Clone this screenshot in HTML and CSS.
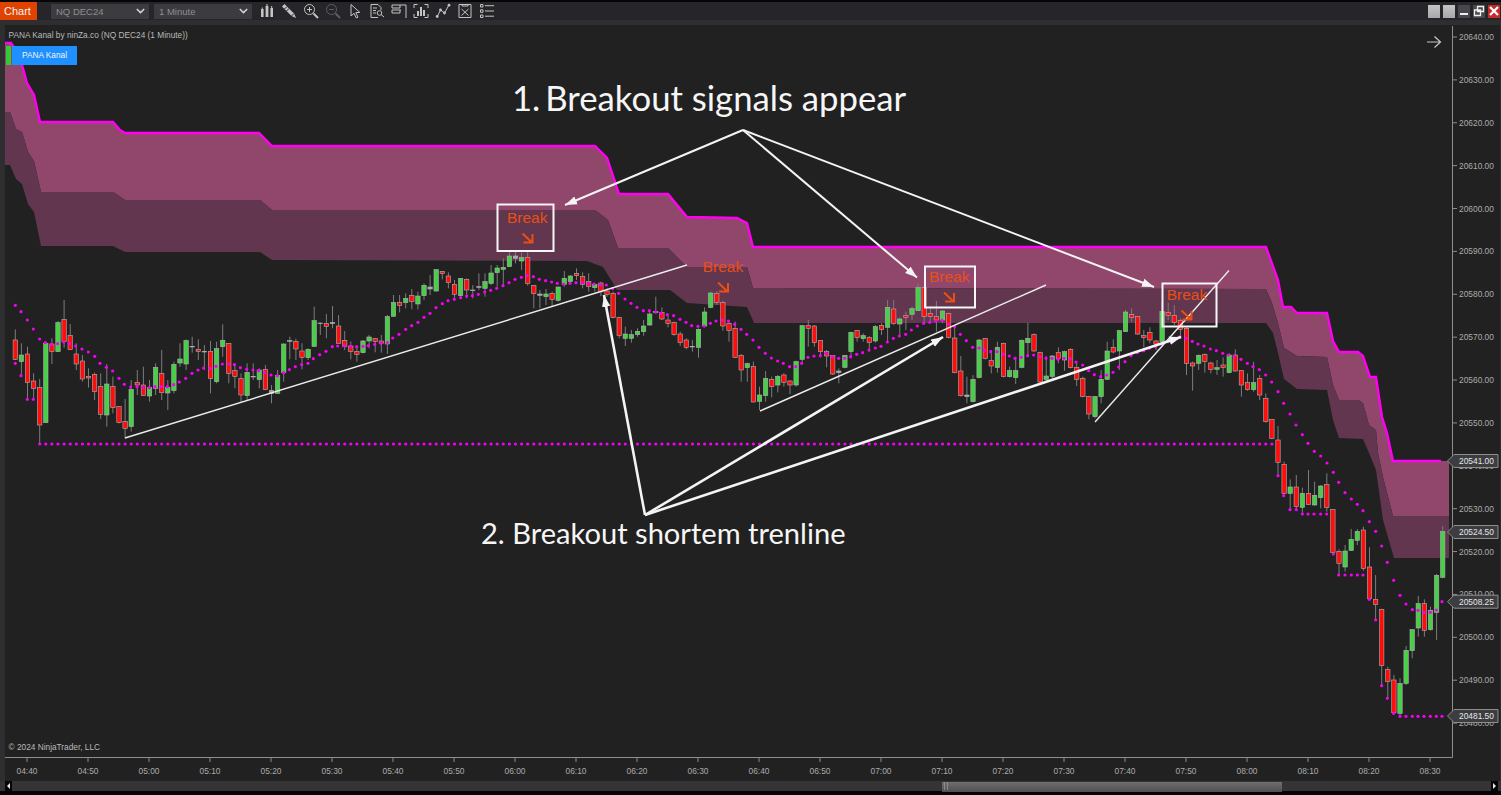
FILE: index.html
```html
<!DOCTYPE html>
<html lang="en">
<head>
    <meta charset="UTF-8">
    <meta name="viewport" content="width=device-width, initial-scale=1.0">
    <title>Chart - NQ DEC24</title>
    <link rel="stylesheet" href="styles.css">
</head>
<body>
    <div class="window">
        <!-- toolbar -->
        <div class="toolbar">
            <div class="chart-tab">Chart</div>
            <div class="select select-first">
                <span>NQ DEC24</span>
                <svg class="chevron" viewBox="0 0 9 6"><path d="M0.8 1 L4.5 4.6 L8.2 1"/></svg>
            </div>
            <div class="select">
                <span>1 Minute</span>
                <svg class="chevron" viewBox="0 0 9 6"><path d="M0.8 1 L4.5 4.6 L8.2 1"/></svg>
            </div>
            <div class="tools">
                <svg class="tool" viewBox="0 0 16 16"><path class="solid" d="M2 6h2.6v8H2z M6.6 3h2.8v11H6.6z M11.4 5h2.6v9h-2.6z"/><path d="M8 1v2 M12.7 3v2 M3.3 4.5v2"/></svg>
                <svg class="tool" viewBox="0 0 16 16"><path class="solid" d="M1 3.5 L3.5 1 L13 10.5 L15 15 L10.5 13 Z"/><path class="cut" d="M3.5 6 L6 3.5 M5.5 8 L8 5.5 M10.5 13 L13 10.5"/></svg>
                <svg class="tool" viewBox="0 0 16 16"><circle cx="6.5" cy="6.5" r="5"/><path d="M4 6.5h5 M6.5 4v5"/><path class="heavy" d="M10.5 10.5 L15 15"/></svg>
                <svg class="tool tool-off" viewBox="0 0 16 16"><circle cx="6.5" cy="6.5" r="5"/><path d="M4 6.5h5"/><path class="heavy" d="M10.5 10.5 L15 15"/></svg>
                <svg class="tool" viewBox="0 0 16 16"><path d="M4 1.5 V13 L7 10.3 L9.3 15 L11 14.2 L8.8 9.6 L12.8 9.4 Z"/></svg>
                <svg class="tool" viewBox="0 0 16 16"><path d="M9 14.5 H2 V1.5 H9 L12 4.5 V7"/><path d="M4 5h4 M4 7.5h3 M4 10h3"/><circle cx="10.5" cy="10" r="2.3"/><path d="M12.2 11.7 L15 14"/></svg>
                <svg class="tool" viewBox="0 0 16 16"><path d="M1 2h14 M15 2v13 M1 2v3h8V2 M1 7h9 M1 7v3h8V7"/></svg>
                <svg class="tool" viewBox="0 0 16 16"><path d="M1 5V1.5h3.5 M11.5 1.5H15V5 M1 11v3.5h3.5 M11.5 14.5H15V11"/><path class="heavy" d="M5 13V8 M8 13V4 M11 13V7"/></svg>
                <svg class="tool" viewBox="0 0 16 16"><path d="M2 14 L5.5 7 L9.5 10 L14 2"/><circle class="solid" cx="2.2" cy="13.5" r="1.4"/><circle class="solid" cx="5.5" cy="7" r="1.4"/><circle class="solid" cx="9.5" cy="10" r="1.4"/><circle class="solid" cx="14" cy="2.2" r="1.4"/></svg>
                <svg class="tool" viewBox="0 0 16 16"><path d="M2 1.5h12v13H2z M5 1v2h6V1"/><path d="M4.5 6 L11.5 12.5 M11.5 6 L4.5 12.5"/></svg>
                <svg class="tool" viewBox="0 0 16 16"><path d="M1.5 1.5h2.5v2.5H1.5z M1.5 6.8h2.5v2.5H1.5z M1.5 12h2.5v2.5H1.5z M6 2.7h9 M6 8h9 M6 13.2h9"/></svg>
            </div>
            <div class="win-btns">
                <div class="win-btn win-btn-light"></div>
                <div class="win-btn win-btn-light"></div>
                <div class="win-btn win-btn-dark"><span class="min-bar"></span></div>
                <div class="win-btn win-btn-dark">
                    <svg viewBox="0 0 12 12"><path d="M4.5 1.5h6v5h-6z M1.5 5h6v5.500h-6z"/></svg>
                </div>
                <div class="win-btn win-btn-close">
                    <svg viewBox="0 0 12 12"><path d="M2 2 L10 10 M10 2 L2 10"/></svg>
                </div>
            </div>
        </div>

        <!-- chart -->
        <div class="chart">
            <svg class="chart-svg" viewBox="5 25 1495 756" width="1495" height="756">
                <defs>
                    <marker id="head" markerUnits="userSpaceOnUse" markerWidth="13" markerHeight="10" refX="12" refY="5" orient="auto">
                        <path d="M0 0.800 L12 5 L0 9.200 Z" fill="#f4f4f4"/>
                    </marker>
                    <symbol id="break-arrow" overflow="visible">
                        <path d="M0.5 0.5 L10 9.500 M1.500 9.500 H10.500 V1"/>
                    </symbol>
                </defs>

                <g id="bands"></g>
                <g id="candles"></g>
                <g id="dots"></g>
                <g id="axes"></g>

                <text class="chart-title" x="8.500" y="37.500">PANA Kanal by ninZa.co (NQ DEC24 (1 Minute))</text>
                <text class="chart-title" x="8.500" y="750">© 2024 NinjaTrader, LLC</text>
                <path class="arrow-right" d="M1427 42 H1440.500 M1434.500 36.500 L1440.500 42 L1434.500 47.500"/>

                <!-- drawn annotations -->
                <g class="trendlines">
                    <line x1="125" y1="438" x2="687" y2="265"/>
                    <line x1="760" y1="411" x2="1046" y2="285"/>
                    <line x1="1095" y1="422" x2="1229" y2="270.500"/>
                </g>
                <g class="pointers">
                    <line x1="743" y1="130" x2="565" y2="205" marker-end="url(#head)"/>
                    <line x1="743" y1="130" x2="917" y2="277.500" marker-end="url(#head)"/>
                    <line x1="743" y1="130" x2="1154" y2="287" marker-end="url(#head)"/>
                </g>
                <g class="pointers pointers-heavy">
                    <line x1="645" y1="515" x2="604" y2="295" marker-end="url(#head)"/>
                    <line x1="645" y1="515" x2="943" y2="337" marker-end="url(#head)"/>
                    <line x1="645" y1="515" x2="1181" y2="337" marker-end="url(#head)"/>
                </g>
                <g class="break-boxes">
                    <rect x="497.500" y="204.500" width="56" height="46.500"/>
                    <rect x="925" y="266.500" width="50" height="41"/>
                    <rect x="1162.500" y="283.500" width="54" height="43"/>
                </g>
                <g class="break-signals">
                    <text x="507" y="222.700">Break</text>
                    <text x="702.700" y="271.700">Break</text>
                    <text x="929" y="281.700">Break</text>
                    <text x="1166.700" y="300">Break</text>
                    <use href="#break-arrow" x="522" y="233"/>
                    <use href="#break-arrow" x="717.500" y="282"/>
                    <use href="#break-arrow" x="943.500" y="292"/>
                    <use href="#break-arrow" x="1181" y="310"/>
                </g>
                <text class="note" x="512" y="111">1.<tspan dx="5">Breakout signals appear</tspan></text>
                <text class="note note-small" x="481" y="544">2. Breakout shortem trenline</text>
            </svg>
            <div class="indicator-flag"><span class="flag-green"></span><span class="flag-label">PANA Kanal</span></div>
        </div>

        <!-- horizontal scroll -->
        <div class="scrollbar">
            <div class="scroll-end"><svg viewBox="0 0 7 10"><path d="M5 2 L2 5 L5 8 Z"/></svg></div>
            <div class="scroll-track">
                <div class="scroll-thumb"><span class="grip"></span></div>
            </div>
            <div class="scroll-end"><svg viewBox="0 0 7 10"><path d="M2 2 L5 5 L2 8 Z"/></svg></div>
        </div>
    </div>

    <script src="chart.js"></script>
</body>
</html>
```

FILE: styles.css
```css
* {
    margin: 0;
    padding: 0;
    box-sizing: border-box;
}

body {
    width: 1501px;
    height: 795px;
    font-family: 'Liberation Sans', Arial, sans-serif;
    background: #050505;
    overflow: hidden;
}

.window {
    height: 100%;
    display: flex;
    flex-direction: column;
    padding-top: 2px;
}

.toolbar {
    height: 18px;
    display: flex;
    align-items: center;
    background: #26262a;
    flex-shrink: 0;
}

.chart-tab {
    width: 37px;
    height: 18px;
    background: #e04300;
    color: #f4f4f4;
    font-size: 11px;
    line-height: 18px;
    padding-left: 4px;
}

.select {
    width: 98px;
    height: 15px;
    margin-left: 5px;
    padding: 0 3px 0 5px;
    display: flex;
    align-items: center;
    justify-content: space-between;
    background: #3b3b40;
    color: #8f8f8f;
    font-size: 9.500px;
}

.select-first {
    margin-left: 14px;
}

.chevron {
    width: 9px;
    height: 6px;
    margin-right: 1px;
}

.chevron path {
    fill: none;
    stroke: #d6d6d6;
    stroke-width: 1.500;
}

.tools {
    margin-left: 7px;
    display: flex;
    gap: 6px;
}

.tool {
    width: 16px;
    height: 16px;
}

.tool path, .tool circle {
    fill: none;
    stroke: #c4c4c4;
    stroke-width: 1;
}

.tool .solid {
    fill: #c4c4c4;
    stroke: none;
}

.tool .heavy {
    stroke-width: 2;
}

.tool .cut {
    stroke: #26262a;
}

.tool-off path, .tool-off circle {
    stroke: #5e5e5e;
}

.win-btns {
    margin-left: auto;
    margin-right: 1px;
    display: flex;
    gap: 3px;
}

.win-btn {
    width: 12px;
    height: 13px;
    display: flex;
    align-items: center;
    justify-content: center;
}

.win-btn svg {
    width: 12px;
    height: 12px;
}

.win-btn path {
    fill: none;
    stroke: #f0f0f0;
    stroke-width: 1.300;
}

.win-btn-light {
    background: linear-gradient(#c4c4c4, #a8a8a8);
}

.win-btn-dark {
    background: #48484c;
}

.win-btn-close {
    background: #c42b2b;
}

.win-btn-close path {
    stroke: #fff;
    stroke-width: 2.200;
}

.min-bar {
    width: 8px;
    height: 2px;
    margin-top: 6px;
    background: #f0f0f0;
}

.chart {
    position: relative;
    flex: 1;
    min-height: 0;
    padding: 5px 1px 0 5px;
    background: #2e2e31;
}

.chart-svg {
    display: block;
    background: #212121;
}

.chart-title {
    font-size: 8.300px;
    fill: #b9b9b9;
}

.arrow-right {
    fill: none;
    stroke: #c8c8c8;
    stroke-width: 1.200;
}

.trendlines line {
    stroke: #ececec;
    stroke-width: 1.400;
}

.pointers line {
    stroke: #f4f4f4;
    stroke-width: 2;
}

.pointers-heavy line {
    stroke-width: 2.600;
}

.break-boxes rect {
    fill: none;
    stroke: #f6f6f6;
    stroke-width: 2;
}

.break-signals text {
    font-size: 15.500px;
    fill: #ea4f14;
}

.break-signals use {
    width: 12px;
    height: 12px;
    fill: none;
    stroke: #ea4f14;
    stroke-width: 2;
}

.note {
    font-family: Lato, 'Open Sans', sans-serif;
    font-size: 34.700px;
    fill: #f6f6f6;
}

.note-small {
    font-size: 29.100px;
}

.price-label, .time-label {
    font-size: 8.400px;
    fill: #ababab;
}

.axis-line {
    stroke: #8e8e8e;
    stroke-width: 1;
}

.badge {
    fill: #3c3c41;
    stroke: #8e8e8e;
    stroke-width: 1;
}

.badge-label {
    font-size: 8.400px;
    fill: #e6e6e6;
}

.indicator-flag {
    position: absolute;
    left: 5px;
    top: 26px;
    height: 19px;
    display: flex;
}

.flag-green {
    width: 5px;
    margin-left: 1px;
    background: #35c935;
}

.flag-label {
    width: 65px;
    margin-left: 1px;
    background: #1e90ff;
    color: #f2f2f2;
    font-size: 8.300px;
    line-height: 19px;
    text-align: center;
}

.scrollbar {
    height: 10px;
    margin-bottom: 4px;
    padding: 0 3px 0 5px;
    display: flex;
    background: #343437;
    flex-shrink: 0;
}

.scroll-end {
    width: 7px;
    height: 10px;
    background: #050505;
}

.scroll-end svg {
    display: block;
    width: 7px;
    height: 10px;
    fill: #e8e8e8;
}

.scroll-track {
    flex: 1;
    padding-left: 930px;
}

.scroll-thumb {
    width: 340px;
    height: 10px;
    padding-left: 2px;
    background: linear-gradient(#6f6f6f, #505052);
}

.grip {
    display: block;
    width: 4px;
    height: 8px;
    margin-top: 1px;
    border-left: 1px solid #8a8a8a;
    border-right: 1px solid #8a8a8a;
}
```

FILE: chart.js
```js
const SVG_NS = 'http://www.w3.org/2000/svg';
const candleX = i => 15.3 + 6.1 * i;

// band edges, screen px
const TOP = [[5,43],[11,43],[16,50],[22,65],[27,83],[34,95],[40,122],[113,122],[120,130],[125,133],[259,133],[272,146],[595,146],[607,158],[619,194],[668,194],[687,217],[737,218],[747,223],[753,247],[1266,247],[1278,280],[1283,307],[1291,307],[1297,313],[1327,313],[1333,341],[1339,352],[1358,352],[1363,356],[1370,377],[1376,377],[1382,417],[1387,433],[1393,461],[1441,461]];
const MID = [[5,112],[10,112],[16,129],[22,132],[28,152],[34,161],[41,192],[113,192],[125,200],[260,200],[272,210],[595,210],[608,220],[618,248],[668,248],[687,267],[747,267],[753,288],[1266,289],[1272,303],[1278,323],[1284,348],[1297,356],[1327,357],[1333,385],[1339,400],[1358,400],[1363,403],[1369,425],[1376,430],[1378,453],[1383,477],[1393,516],[1449,516]];
const BOT = [[5,165],[10,165],[16,179],[22,184],[28,204],[34,212],[41,246],[113,246],[125,252],[260,252],[272,260],[587,261],[603,267],[613,283],[617,290],[670,290],[687,303],[747,307],[754,323],[1266,323],[1273,333],[1278,353],[1284,379],[1297,389],[1327,390],[1333,420],[1339,438],[1363,439],[1369,453],[1376,470],[1383,520],[1394,558],[1449,558]];

// candles: bodyTop, bodyBottom, wickTop, wickBottom in 1/3 px from y0
const CANDLES = [
  { y0: 280, rows: [
    [180,238,148,240,'r'],[225,245,190,290,'g'],[222,308,200,360,'r'],[303,325,280,355,'r'],[322,435,297,490,'r'],
    [190,428,185,428,'g'],[192,215,175,252,'r'],[128,215,123,215,'g'],[118,185,60,203,'r'],[166,209,132,210,'r'],
    [222,252,190,270,'r'],[243,297,225,305,'r'],[289,294,265,323,'r'],[284,334,278,360,'r'],[319,403,280,417,'r'],
    [312,405,252,440,'g'],[319,383,290,400,'r'],[380,428,378,430,'r'],[424,445,357,475,'r'],[328,440,300,455,'g'],
    [307,315,270,345,'r'],[315,347,260,348,'r'],[323,348,300,365,'g'],[262,325,250,345,'g'],[280,338,210,360,'r'],
    [322,339,300,390,'g'],[253,332,245,340,'g'],[237,249,190,260,'g'],[182,252,178,270,'g'],[199,201,170,218,'d'],
    [208,214,178,240,'r'],[214,216,195,270,'d'],[214,296,183,340,'r'],[206,305,185,310,'g'],[181,200,133,230,'g'],
    [190,280,190,310,'r'],[272,289,250,325,'r'],[295,345,280,365,'r'],[277,347,250,360,'g'],[289,291,250,300,'d'],
    [270,299,265,325,'g'],[268,329,255,330,'r'],[331,341,315,370,'d'],[287,340,270,342,'g'],[192,278,190,305,'g'],
    [182,184,170,238,'d'],[184,207,176,240,'r'],[213,233,190,268,'r'],[208,233,205,240,'g'],[122,199,80,200,'g'],
    [129,131,128,165,'d'],[131,139,102,175,'r'],[127,131,78,145,'d'],[138,190,105,190,'r'],[181,199,153,210,'r'],
    [198,214,185,238,'r'],[214,223,198,245,'r'],[183,218,180,220,'g'],[171,183,165,205,'g'],[176,184,175,217,'r'],
    [183,190,165,218,'r'],[110,192,105,222,'g'],[67,109,45,110,'g'],[68,76,45,97,'r']
  ]},
  { y0: 190, rows: [
    [325,338,310,355,'g'],[316,335,297,358,'r'],[318,342,305,358,'g'],[286,317,280,330,'g'],[291,297,255,315,'d'],
    [239,303,238,305,'g'],[244,250,243,268,'r'],[258,278,247,295,'r'],[283,313,270,330,'r'],[265,317,265,318,'g'],
    [268,300,265,325,'r'],[300,302,285,325,'d'],[290,292,250,300,'d'],[275,295,250,320,'g'],[249,280,225,285,'g'],
    [234,248,225,290,'g'],[232,238,205,290,'g'],[198,230,185,230,'g'],[198,205,182,220,'d'],[203,213,188,240,'g'],
    [203,280,185,287,'r'],[287,310,285,355,'r'],[312,316,300,355,'d'],[312,320,297,345,'g'],[310,328,305,350,'r'],
    [291,331,290,335,'g'],[265,283,243,290,'g'],[258,275,255,278,'g'],[251,257,235,270,'r'],[260,283,247,295,'r'],
    [274,290,250,305,'r'],[284,293,280,305,'g'],[279,304,275,318,'r'],[303,313,295,320,'r'],[310,382,305,385,'r'],
    [383,436,380,445,'r'],[432,445,410,468,'g'],[434,445,420,458,'g'],[424,434,415,440,'g'],[408,425,390,437,'g'],
    [372,405,365,408,'g'],[365,368,320,372,'d'],[367,387,352,390,'r'],[390,400,375,412,'r'],[398,434,395,437,'r'],
    [432,458,425,468,'r'],[450,472,445,478,'r'],[469,471,450,485,'d'],[418,472,415,503,'g'],[366,408,352,412,'g'],
    [309,352,305,355,'g'],[310,337,303,345,'r'],[338,408,332,422,'r'],[400,422,390,455,'r'],[415,502,395,503,'r'],
    [497,540,492,575,'r'],[521,533,518,575,'g'],[530,636,515,637,'r'],[615,634,590,660,'g'],[565,617,543,635,'g'],
    [568,590,560,622,'r'],[559,585,555,607,'g'],[555,577,550,590,'r'],[573,585,570,612,'r'],[515,585,512,590,'g']
  ]},
  { y0: 240, rows: [
    [257,358,255,370,'g'],[256,265,240,320,'r'],[258,308,255,320,'r'],[302,335,300,352,'r'],[335,348,330,382,'r'],
    [347,402,345,405,'r'],[393,398,385,430,'d'],[346,382,345,385,'g'],[277,335,275,355,'g'],[272,293,270,305,'r'],
    [287,296,280,305,'g'],[292,308,288,335,'r'],[260,303,255,308,'g'],[256,268,250,285,'r'],[202,262,180,305,'g'],
    [207,250,180,255,'r'],[237,252,232,285,'g'],[226,233,215,270,'r'],[206,223,200,240,'g'],[143,212,130,212,'g'],
    [143,230,140,250,'r'],[221,229,200,250,'r'],[230,240,183,275,'r'],[213,240,210,250,'g'],[221,292,218,295,'r'],
    [294,398,255,400,'r'],[393,467,348,470,'r'],[465,470,410,490,'d'],[418,485,405,487,'g'],[300,413,297,415,'g'],
    [296,355,295,358,'r'],[362,378,330,400,'r'],[322,383,305,398,'g'],[310,409,308,412,'r'],[392,410,380,413,'g'],
    [392,413,350,432,'g'],[301,382,298,385,'g'],[295,308,248,345,'g'],[284,333,280,335,'r'],[338,426,335,430,'r'],
    [408,418,348,425,'g'],[348,409,345,420,'g'],[338,356,322,370,'r'],[335,360,332,392,'g'],[328,383,325,385,'r'],
    [382,418,365,438,'r'],[416,469,410,472,'r'],[470,522,468,538,'r'],[470,530,468,535,'g'],[418,470,390,490,'g'],
    [333,418,305,420,'g'],[322,336,298,340,'r'],[272,333,270,390,'g'],[216,275,210,275,'g'],[223,233,205,245,'r'],
    [230,282,228,285,'r'],[287,293,270,322,'r'],[278,300,262,310,'r'],[303,312,300,330,'r'],[215,305,185,320,'g'],
    [217,226,188,240,'r'],[226,248,195,255,'r'],[242,268,235,285,'r'],[265,370,262,405,'r'],[369,378,365,452,'r'],
    [346,370,343,390,'g'],[344,364,340,398,'r'],[369,388,365,400,'r'],[383,388,360,405,'g'],[375,383,352,410,'r'],
    [345,398,340,400,'g'],[345,393,328,395,'r'],[392,435,390,470,'r'],[428,449,400,452,'r'],[428,449,365,455,'g'],
    [416,465,405,480,'r'],[475,545,460,548,'r'],[538,595,538,597,'r']
  ]},
  { y0: 420, rows: [
    [60,127,18,163,'r'],[133,220,125,222,'r'],[201,220,178,268,'g'],[201,260,165,268,'r'],[220,262,203,282,'g'],
    [220,253,150,255,'r'],[226,255,185,257,'g'],[198,233,195,265,'g'],[194,262,160,275,'r'],[269,397,268,400,'r'],
    [394,430,388,465,'r'],[393,441,375,455,'g'],[358,391,327,393,'g'],[334,361,327,375,'g'],[330,445,320,452,'r'],
    [441,536,382,538,'r'],[538,553,465,600,'r'],[568,737,566,795,'r'],[749,784,740,835,'r'],[780,878,765,880,'r'],
    [790,880,775,885,'g'],[691,790,678,795,'g'],[629,692,628,715,'g'],[551,624,528,650,'g'],[551,631,538,650,'r'],
    [571,629,560,632,'g'],[466,577,462,660,'g'],[335,472,318,475,'g']
  ]}
];

// dots: x, y in 1/3 px from x0, y0
const DOTS = [
  { x0: 0, y0: 280, pts: [[46,76],[63,95],[82,120],[100,147],[119,177],[136,188],[154,193],[173,191],[191,186],[208,190],[227,198],[246,207],[265,216],[284,229],[300,250],[319,262],[338,273],[357,295],[373,313],[392,321],[411,320],[429,323],[448,323],[465,320],[484,320],[502,320],[521,314],[538,306],[557,295],[576,280],[594,270],[611,264],[630,265],[648,259],[667,252],[686,252],[703,254],[721,263],[740,268],[759,270],[776,272],[794,278],[813,285],[832,287],[851,278],[868,269],[886,260],[905,254],[924,250],[940,236],[959,224],[978,214],[997,200],[1013,198],[1032,197],[1051,199],[1070,200],[1089,199],[1105,197],[1124,193],[1143,190],[1162,188],[1178,174],[1197,163],
    [46,250],[63,287],[82,358],[100,358]] },
  { x0: 400, y0: 190, pts: [[17,418],[35,407],[54,397],[72,382],[90,370],[108,353],[127,341],[144,332],[163,328],[182,323],[200,318],[217,317],[235,313],[254,306],[272,301],[290,295],[309,287],[327,278],[345,268],[364,262],[381,257],[400,260],[418,268],[437,272],[455,276],[472,280],[491,282],[510,280],[528,278],[546,278],[565,280],[582,282],[601,284],[619,285],[638,296],[656,310],[675,327],[693,340],[711,352],[730,362],[748,362],[767,366],[783,370],[802,374],[821,377],[840,388],[858,397],[875,407],[894,409],[912,408],[931,400],[948,393],[967,390],[985,393],[1004,403],[1023,418],[1040,433],[1059,450],[1077,472],[1096,490],[1114,504],[1133,513],[1150,520],[1169,530],[1187,530]] },
  { x0: 800, y0: 240, pts: [[5,370],[24,352],[42,348],[61,347],[78,340],[97,350],[116,355],[134,355],[152,350],[170,343],[188,338],[207,330],[226,324],[243,319],[262,306],[280,295],[298,288],[317,283],[334,270],[352,258],[371,250],[389,247],[407,243],[426,241],[445,252],[464,260],[481,283],[499,302],[518,322],[537,324],[553,330],[572,335],[591,335],[610,343],[628,348],[645,355],[664,352],[683,347],[701,345],[720,350],[738,355],[756,355],[774,358],[792,355],[810,356],[828,366],[848,375],[866,392],[883,404],[902,410],[920,405],[939,397],[956,381],[975,365],[993,347],[1012,338],[1031,332],[1048,325],[1067,320],[1085,312],[1104,305],[1122,298],[1140,290],[1158,295],[1177,304],[1194,312],[1212,318],[1231,327],[1249,332],[1268,340],[1285,345],[1303,349]] },
  { x0: 1230, y0: 240, pts: [[33,358],[52,370],[69,380],[88,389],[107,405],[125,426],[144,455],[161,490],[180,522],[198,555],[217,584],[234,610]] },
  { x0: 1240, y0: 420, pts: [[223,94],[242,108],[261,129],[280,157],[296,187],[315,218],[334,237],[352,253],[369,272],[388,305],[407,334],[425,378],[442,427],[461,481],[480,526],[498,552],[517,569],[534,571],[552,577],[571,577],[589,570],[606,545],
    [114,167],[131,227],[150,269],[169,269],[187,282],[204,282],[222,282],[242,282],[260,282],[280,402],[296,465],[315,465],[334,465],[352,465],[369,465],[388,538],[407,600],[425,797],[442,835],[461,880],[480,889],[498,889],[517,889],[534,889],[552,889],[571,889],[589,889],[606,889]] }
];

const BADGES = [['20541.00', 461], ['20524.50', 532], ['20508.25', 601.7], ['20481.50', 716]];

function add(parent, tag, attrs, text) {
  const el = document.createElementNS(SVG_NS, tag);
  for (const k in attrs) el.setAttribute(k, attrs[k]);
  if (text) el.textContent = text;
  parent.appendChild(el);
  return el;
}

const pts = list => list.map(p => p.join(',')).join(' ');

function drawBands() {
  const g = document.getElementById('bands');
  add(g, 'polygon', { points: pts([...TOP, [1449, 461], ...[...MID].reverse()]), fill: '#91476c' });
  add(g, 'polygon', { points: pts([...MID, ...[...BOT].reverse()]), fill: '#61364e' });
  add(g, 'polyline', { points: pts(TOP), fill: 'none', stroke: '#ff00f2', 'stroke-width': 2.4 });
}

function drawCandles() {
  const g = document.getElementById('candles');
  const fills = { r: '#ff0d0d', g: '#45d045', d: '#a8a8a8' };
  let i = 0;
  CANDLES.forEach(({ y0, rows }) => rows.forEach(([top, bot, wt, wb, c]) => {
    const x = candleX(i++);
    add(g, 'line', { x1: x, x2: x, y1: y0 + wt / 3, y2: y0 + wb / 3, stroke: '#7c7c7c', 'stroke-width': 1 });
    add(g, 'rect', { x: x - 2.2, y: y0 + top / 3, width: 4.4, height: (bot - top) / 3, fill: fills[c], stroke: '#b0b0b0', 'stroke-width': 0.6 });
  }));
}

function drawDots() {
  const g = document.getElementById('dots');
  const dot = (x, y) => add(g, 'circle', { cx: x, cy: y, r: 1.600, fill: '#f400f4' });
  DOTS.forEach(({ x0, y0, pts }) => pts.forEach(([x, y]) => dot(x0 + x / 3, y0 + y / 3)));
  for (let i = 4; i <= 206; i++) dot(candleX(i), 444);
}

function drawAxes() {
  const g = document.getElementById('axes');
  add(g, 'line', { class: 'axis-line', x1: 5, x2: 1452.500, y1: 757.500, y2: 757.500 });
  add(g, 'line', { class: 'axis-line', x1: 1452.500, x2: 1452.500, y1: 26, y2: 757.500 });

  for (let p = 20640; p >= 20480; p -= 10) {
    const y = 37 + (20640 - p) * 4.288;
    add(g, 'line', { class: 'axis-line', x1: 1453, x2: 1457, y1: y, y2: y });
    add(g, 'text', { class: 'price-label', x: 1459, y: y + 3 }, p + '.00');
  }

  for (let i = 0; i < 24; i++) {
    const x = 27 + 61 * i;
    const m = 280 + 10 * i;
    const label = String(Math.floor(m / 60)).padStart(2, '0') + ':' + String(m % 60).padStart(2, '0');
    add(g, 'line', { class: 'axis-line', x1: x, x2: x, y1: 758, y2: 762 });
    add(g, 'text', { class: 'time-label', x: x, y: 774, 'text-anchor': 'middle' }, label);
  }

  BADGES.forEach(([label, y]) => {
    add(g, 'path', { class: 'badge', d: `M1447.500 ${y} L1454 ${y - 6.500} H1498 V${y + 6.500} H1454 Z` });
    add(g, 'text', { class: 'badge-label', x: 1459, y: y + 3 }, label);
  });
}

drawBands();
drawCandles();
drawDots();
drawAxes();
```
